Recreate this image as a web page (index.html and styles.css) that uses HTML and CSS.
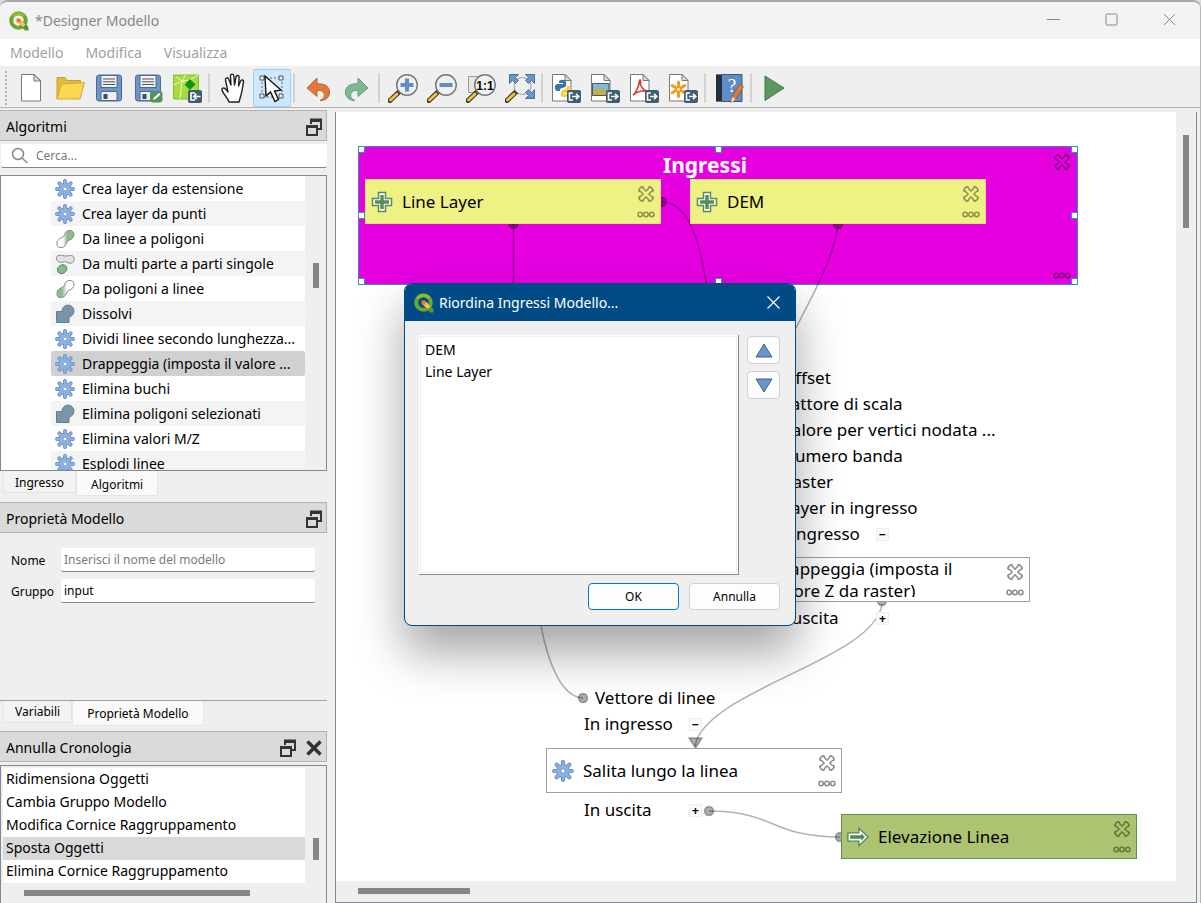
FILE: index.html
```html
<!DOCTYPE html>
<html lang="it">
<head>
  <meta charset="UTF-8" />
  <meta name="viewport" content="width=device-width, initial-scale=1.0"/>
  <title>*Designer Modello</title>
  <link rel="stylesheet" href="styles.css">
</head>
<body>
  <!-- shared icons -->
  <svg class="sprites" width="0" height="0">
    <symbol id="qgis" viewBox="0 0 20 20">
      <circle cx="9.5" cy="9.5" r="7.3" fill="none" stroke="#6ea52f" stroke-width="4"/>
      <path d="M3.5 5.5A7.3 7.3 0 0 1 15 5" fill="none" stroke="#8cbf2b" stroke-width="3"/>
      <path d="M12 12l2-2L19.500 16v3.500h-3.500L10.500 14z" fill="#589632"/>
      <path d="M9 9l3.500 0 4 4.500-2.500 2.500L9 12z" fill="#f0c264"/>
      <path d="M7.500 7.500h4v4h-4z" fill="#ee7913"/>
    </symbol>
    <symbol id="gear" viewBox="0 0 20 20">
      <g stroke="#5b88c2" stroke-width="3.800" stroke-linecap="round">
        <path d="M10 2v16M2 10h16M4.300 4.300l11.400 11.400M15.700 4.300L4.300 15.700"/>
      </g>
      <circle cx="10" cy="10" r="6.200" fill="#5b88c2"/>
      <g stroke="#8db1de" stroke-width="2.400" stroke-linecap="round">
        <path d="M10 2v16M2 10h16M4.300 4.300l11.400 11.400M15.700 4.300L4.300 15.700"/>
      </g>
      <circle cx="10" cy="10" r="5.500" fill="#8db1de"/>
      <circle cx="10" cy="10" r="2" fill="#fff" stroke="#7ba0d2"/>
    </symbol>
    <linearGradient id="fadeGreen" x1="0" y1="0" x2="1" y2="0">
      <stop offset="0.350" stop-color="#fff"/><stop offset="0.600" stop-color="#8bbd8b"/>
    </linearGradient>
    <linearGradient id="fadeWhite" x1="0" y1="0" x2="1" y2="0">
      <stop offset="0.300" stop-color="#8bbd8b"/><stop offset="0.600" stop-color="#fff"/>
    </linearGradient>
    <symbol id="line2poly" viewBox="0 0 20 20">
      <path d="M2 14c0-4 4-5 6-6s1-6 6-6.500 6 4 4 7-5 2-6 4.500-2 5.500-6 5.500-4-2-4-4.500z" fill="url(#fadeGreen)" stroke="#7e8c7e"/>
    </symbol>
    <symbol id="poly2line" viewBox="0 0 20 20">
      <path d="M2 14c0-4 4-5 6-6s1-6 6-6.500 6 4 4 7-5 2-6 4.500-2 5.500-6 5.500-4-2-4-4.500z" fill="url(#fadeWhite)" stroke="#7e8c7e"/>
    </symbol>
    <symbol id="multipart" viewBox="0 0 20 20">
      <path d="M1.500 3.500c1-4 6-1.500 9-1.500s8-2 8.500 2-2 6-5 5-4-2-6-1-7 0-6.500-4.500z" fill="#e3e3e3" stroke="#8a8a8a"/>
      <path d="M2.500 16c-.5-3 3.500-6 7-5s3 8-2.500 8.500c-3 0-4.500-1-4.500-3.500z" fill="#85b985" stroke="#5a7f5a"/>
    </symbol>
    <symbol id="dissolve" viewBox="0 0 20 20">
      <path d="M1.500 7.500H7A6 6 0 1 1 14 13v5.500H1.500z" fill="#7a94a8" stroke="#62808f"/>
    </symbol>
    <symbol id="float" viewBox="0 0 16 18">
      <path d="M5 6V1.500h10V11h-4" fill="none" stroke="#333" stroke-width="2"/>
      <path d="M4 1h12v3H4z" fill="#333"/>
      <path d="M1 8h10v9H1z" fill="#dadada" stroke="#333" stroke-width="2"/>
      <path d="M0 7h12v3H0z" fill="#333"/>
    </symbol>
    <symbol id="del" viewBox="0 0 18 18">
      <g fill="none" stroke="currentColor" stroke-linecap="round">
        <path d="M4.500 4.500l9 9M13.500 4.500l-9 9" stroke-width="5.500"/>
        <path d="M3 5.300h0M5.300 3h0M15 5.300h0M12.700 3h0M3 12.700h0M5.300 15h0M15 12.700h0M12.700 15h0" stroke-width="3.800"/>
      </g>
      <g fill="none" stroke="var(--fill)" stroke-linecap="round">
        <path d="M4.500 4.500l9 9M13.500 4.500l-9 9" stroke-width="2.600"/>
        <path d="M3.300 5.500h0M5.500 3.300h0M14.700 5.500h0M12.500 3.300h0M3.300 12.500h0M5.500 14.700h0M14.700 12.500h0M12.500 14.700h0" stroke-width="1"/>
      </g>
    </symbol>
    <symbol id="more" viewBox="0 0 18 7">
      <g fill="none" stroke="currentColor" stroke-width="1.500">
        <circle cx="3.200" cy="3.500" r="2.200"/><circle cx="9" cy="3.500" r="2.200"/><circle cx="14.800" cy="3.500" r="2.200"/>
      </g>
    </symbol>
    <symbol id="plus" viewBox="0 0 22 22">
      <path d="M7.500 1.500h7v6h6v7h-6v6h-7v-6h-6v-7h6z" fill="#fff" stroke="#5a8c5a" stroke-width="1.500"/>
      <path d="M11 4v14M4 11h14" stroke="#5a8c5a" stroke-width="3.500"/>
    </symbol>
    <symbol id="arrow" viewBox="0 0 24 22">
      <path d="M1 6.500h12V1.500l10 9.500-10 9.500v-5H1z" fill="#fff" stroke="#4f8a56" stroke-width="1.500"/>
      <path d="M3.500 9h12V7l4 4-4 4v-2h-12z" fill="#4f8a56"/>
    </symbol>
    <symbol id="lens" viewBox="0 0 30 30">
      <path d="M2 27.500L11 19" stroke="#333" stroke-width="5" stroke-linecap="round"/>
      <path d="M2.500 27L9 21" stroke="#f4c33c" stroke-width="3" stroke-linecap="round"/>
      <circle cx="19" cy="12" r="10.300" fill="#f0f0ee" stroke="#777" stroke-width="1.500"/>
    </symbol>
    <symbol id="sheet" viewBox="0 0 30 30">
      <path d="M1.500 1.500h12.500l6 6v20.500h-18.500z" fill="#fff" stroke="#777"/>
      <path d="M14 1.500v6h6z" fill="#ddd" stroke="#777"/>
    </symbol>
    <symbol id="out" viewBox="0 0 30 30">
      <rect x="16" y="17" width="14" height="13" rx="2" fill="#3f5d73"/>
      <path d="M22 20h-3.500v7H22M21 23.500h6.500M25 20.800l2.800 2.700L25 26.200" fill="none" stroke="#fff" stroke-width="1.600"/>
    </symbol>
    <symbol id="floppy" viewBox="0 0 30 30">
      <rect x="2.500" y="2" width="25" height="26" rx="2.500" fill="#6d96c4" stroke="#4a6a90"/>
      <path d="M7 2.500h16v12H7z" fill="#f2f2f2" stroke="#4a6a90"/>
      <path d="M9 6h12M9 8.800h12M9 11.500h12" stroke="#555"/>
      <path d="M7 18.500h16v9H7z" fill="#eee" stroke="#4a6a90"/>
      <path d="M9.500 21h4v5h-4z" fill="#35506f"/>
    </symbol>
  </svg>

  <div class="window">
    <header class="titlebar">
      <svg class="logo"><use href="#qgis"/></svg>
      <span class="title">*Designer Modello</span>
      <button class="win-btn" aria-label="Riduci"><svg width="13" height="13"><path d="M0 6.500h13" stroke="#888"/></svg></button>
      <button class="win-btn" aria-label="Ingrandisci"><svg width="13" height="13"><rect x="1" y="1" width="11" height="11" rx="1" fill="none" stroke="#888"/></svg></button>
      <button class="win-btn" aria-label="Chiudi"><svg width="13" height="13"><path d="M1 1l11 11M12 1L1 12" stroke="#888"/></svg></button>
    </header>

    <nav class="menubar">
      <button>Modello</button>
      <button>Modifica</button>
      <button>Visualizza</button>
    </nav>

    <div class="toolbar">
      <span class="grip"></span>
      <button aria-label="Nuovo"><svg viewBox="0 0 30 30"><path d="M5.500 1.500h13l6 6v20.500h-19z" fill="#fff" stroke="#777"/><path d="M18 1.500v6.500h6.500z" fill="#ddd" stroke="#777"/></svg></button>
      <button aria-label="Apri"><svg viewBox="0 0 30 30"><path d="M2 26V4.500h8l2 3h13.500V12" fill="#e3b93f" stroke="#c79f31"/><path d="M2 26L6.500 11l23-1.500L25 26z" fill="#fbd84f" stroke="#d2aa35"/></svg></button>
      <button aria-label="Salva"><svg viewBox="0 0 30 30"><use href="#floppy"/></svg></button>
      <button aria-label="Salva con nome"><svg viewBox="0 0 30 30"><use href="#floppy"/><rect x="17" y="18" width="12.500" height="11.500" rx="3" fill="#56905a"/><path d="M20 27l1-2.500 5-4.500 1.500 1.500-5 4.500z" fill="#fff"/></svg></button>
      <button aria-label="Salva nel progetto"><svg viewBox="0 0 30 30"><path d="M1.500 2h25v24h-25z" fill="#a9da3f" stroke="#7fbf2c"/><path d="M1.500 12l9-4 16 14M10.500 8l3-6M10 8l-2 18M4 4l6 4 8-1 8-5" fill="none" stroke="#e8f6c0"/><path d="M18 6l5.500 5.500-5.500 5.500-5.500-5.500z" fill="#0d9410"/><rect x="16" y="17" width="14" height="13" rx="2" fill="#3f5d73"/><path d="M23 20h-4v7h4M28.500 23.500h-6.500M24.500 20.800l-2.800 2.700 2.800 2.700" fill="none" stroke="#fff" stroke-width="1.600"/></svg></button>
      <span class="sep"></span>
      <button aria-label="Sposta mappa"><svg viewBox="0 0 30 30"><path d="M11 29c-1-4-6-8-7-12-.5-2 2-3 4-.5l2 2.500L7.500 7c-.5-2.500 2.500-3 3.200-.8L13 12l-.5-9c0-2.500 3-2.500 3.300 0L16.500 12l1.500-8c.5-2.300 3.300-1.800 3.100.5L20.500 13l2.200-5c.9-2 3.300-1 2.800 1-1 5-1 8-2.500 13l-2 7z" fill="#fff" stroke="#222" stroke-width="1.400" stroke-linejoin="round"/></svg></button>
      <button class="checked" aria-label="Seleziona"><svg viewBox="0 0 30 30"><path d="M5 5h20v19H5z" fill="none" stroke="#666" stroke-dasharray="2 2"/><path d="M3 3h4v4H3zM22 3h4v4h-4zM3 21h4v4H3zM22 21h4v4h-4z" fill="#eee" stroke="#555"/><path d="M8 3l1 20 4.500-4 4.500 9.500 3.500-2-4-8.500 6.500-1z" fill="#fff" stroke="#111" stroke-width="1.400"/></svg></button>
      <span class="sep"></span>
      <button aria-label="Annulla"><svg viewBox="0 0 30 30"><path d="M4 15L14 5v6c8-1 13 3 12.500 9-.5 5-4 7.500-9.500 7.500 4-2 5-4 4-7-1-2.500-3.500-3.500-7-3v6z" fill="#e07a3a" stroke="#c8612a"/></svg></button>
      <button aria-label="Ripeti"><svg viewBox="0 0 30 30"><path d="M26 15L16 5v6c-8-1-13 3-12.500 9 .5 5 4 7.500 9.500 7.500-4-2-5-4-4-7 1-2.500 3.500-3.500 7-3v6z" fill="#7fb790" stroke="#62a077"/></svg></button>
      <span class="sep"></span>
      <button aria-label="Zoom avanti"><svg viewBox="0 0 30 30"><use href="#lens"/><path d="M19 5.500v13M12.500 12h13" stroke="#5f8cc2" stroke-width="4"/></svg></button>
      <button aria-label="Zoom indietro"><svg viewBox="0 0 30 30"><use href="#lens"/><path d="M12.500 12h13" stroke="#5f8cc2" stroke-width="4"/></svg></button>
      <button aria-label="Zoom 100%"><svg viewBox="0 0 30 30"><path d="M2.500 3.500h14v16h-14z" fill="#e6e6e0" stroke="#999"/><use href="#lens"/><text x="19" y="16.500" text-anchor="middle" class="ratio">1:1</text></svg></button>
      <button aria-label="Zoom completo"><svg viewBox="0 0 30 30"><path d="M2 27.500L11 19" stroke="#333" stroke-width="5" stroke-linecap="round"/><path d="M2.500 27L9 21" stroke="#f4c33c" stroke-width="3" stroke-linecap="round"/><circle cx="17.500" cy="13" r="8.500" fill="#f0f0ee" stroke="#999"/><path d="M4.500 1.500h9l-3 3 3 3-3 3-3-3-3 3zM29.500 1.500v9l-3-3-3 3-3-3 3-3-3-3zM29.500 25.500h-9l3-3-3-3 3-3 3 3 3-3z" fill="#6a95c6" stroke="#4d739f"/></svg></button>
      <span class="sep"></span>
      <button aria-label="Esporta come Python"><svg viewBox="0 0 30 30"><use href="#sheet"/><path d="M8 9c0-3 7-3 7 0v4c0 2-6 1-6 4v1H6c-3-1-3-6 0-7h6v-1H8z" fill="#3a73a5"/><path d="M17 22c0 3-7 3-7 0v-3c0-3 6-2 6-5v-1h2c3 1 3 6 0 7h-5v1h4z" fill="#f8cf40"/><use href="#out"/></svg></button>
      <button aria-label="Esporta come immagine"><svg viewBox="0 0 30 30"><use href="#sheet"/><path d="M2.500 10.500h16.500v12H2.500z" fill="#7fb8e0" stroke="#555"/><path d="M3 18c3-2 6-4 8-3s5 2 7.500 2v5H3z" fill="#c4b04a"/><use href="#out"/></svg></button>
      <button aria-label="Esporta come PDF"><svg viewBox="0 0 30 30"><use href="#sheet"/><path d="M4 22c2-1 6-8 6.500-14 .3-2 1.500-1 1 1-1 4 3 8 7 10-4-2-10-1-14.500 3z" fill="none" stroke="#d83a2e" stroke-width="1.600"/><use href="#out"/></svg></button>
      <button aria-label="Esporta come SVG"><svg viewBox="0 0 30 30"><use href="#sheet"/><path d="M10.500 9v14.500M4.200 12.600l12.600 7.200M16.800 12.600L4.200 19.800" stroke="#f39b1d" stroke-width="3" stroke-linecap="round"/><circle cx="10.500" cy="16.200" r="1.500" fill="#fff"/><use href="#out"/></svg></button>
      <span class="sep"></span>
      <button aria-label="Modifica aiuto"><svg viewBox="0 0 30 30"><path d="M2 1.500h26v27H2z" fill="#5f8cc2"/><path d="M2 1.500h6v27H2z" fill="#23303f"/><path d="M8 1.500h20v27H8" fill="none" stroke="#3a577c"/><text x="18" y="19" text-anchor="middle" class="mark">?</text><path d="M26 11l3.500 2.500-8 13-4.500 3.500 1-6z" fill="#e07a3a" stroke="#a34d1c" stroke-width=".7"/><path d="M18 24l3.500 2.500-4.500 3.500z" fill="#ddd"/></svg></button>
      <span class="sep"></span>
      <button aria-label="Esegui"><svg viewBox="0 0 30 30"><path d="M5 3l19 12-19 12.500z" fill="#5a9a60" stroke="#3f7a48"/></svg></button>
    </div>

    <main class="main">
      <aside class="docks">
        <section class="dock dock-algorithms">
          <h2>Algoritmi<button class="dock-btn" aria-label="Sgancia"><svg width="16" height="18"><use href="#float"/></svg></button></h2>
          <div class="search">
            <svg width="18" height="18" fill="none" stroke="#888" stroke-width="1.500"><circle cx="7" cy="7" r="5.500"/><path d="M11 11l5.500 5"/></svg>
            <input type="text" aria-label="Cerca" placeholder="Cerca...">
          </div>
          <div class="tree">
            <ul>
              <li><svg><use href="#gear"/></svg>Crea layer da estensione</li>
              <li><svg><use href="#gear"/></svg>Crea layer da punti</li>
              <li><svg><use href="#line2poly"/></svg>Da linee a poligoni</li>
              <li><svg><use href="#multipart"/></svg>Da multi parte a parti singole</li>
              <li><svg><use href="#poly2line"/></svg>Da poligoni a linee</li>
              <li><svg><use href="#dissolve"/></svg>Dissolvi</li>
              <li><svg><use href="#gear"/></svg>Dividi linee secondo lunghezza...</li>
              <li class="selected"><svg><use href="#gear"/></svg>Drappeggia (imposta il valore ...</li>
              <li><svg><use href="#gear"/></svg>Elimina buchi</li>
              <li><svg><use href="#dissolve"/></svg>Elimina poligoni selezionati</li>
              <li><svg><use href="#gear"/></svg>Elimina valori M/Z</li>
              <li><svg><use href="#gear"/></svg>Esplodi linee</li>
            </ul>
            <div class="vscroll"><span class="thumb"></span></div>
          </div>
          <div class="tabs">
            <button>Ingresso</button>
            <button class="active">Algoritmi</button>
          </div>
        </section>

        <section class="dock">
          <h2>Proprietà Modello<button class="dock-btn" aria-label="Sgancia"><svg width="16" height="18"><use href="#float"/></svg></button></h2>
          <form class="props">
            <label for="nome">Nome</label>
            <input type="text" id="nome" placeholder="Inserisci il nome del modello">
            <label for="gruppo">Gruppo</label>
            <input type="text" id="gruppo" value="input">
          </form>
          <div class="tabs tabs-line">
            <button>Variabili</button>
            <button class="active">Proprietà Modello</button>
          </div>
        </section>

        <section class="dock">
          <h2>Annulla Cronologia
            <button class="dock-btn" aria-label="Sgancia"><svg width="16" height="18"><use href="#float"/></svg></button>
            <button class="dock-btn" aria-label="Chiudi"><svg width="16" height="16"><path d="M1.500 1.500l13 13M14.500 1.500l-13 13" stroke="#333" stroke-width="3.500"/></svg></button>
          </h2>
          <div class="history">
            <ul>
              <li>Ridimensiona Oggetti</li>
              <li>Cambia Gruppo Modello</li>
              <li>Modifica Cornice Raggruppamento</li>
              <li class="selected">Sposta Oggetti</li>
              <li>Elimina Cornice Raggruppamento</li>
            </ul>
            <div class="vscroll"><span class="thumb"></span></div>
            <div class="hscroll"><span class="thumb"></span></div>
          </div>
        </section>
      </aside>

      <section class="view">
        <div class="scene">
          <div class="group">
            <span class="handle tl"></span><span class="handle tc"></span><span class="handle tr"></span>
            <span class="handle ml"></span><span class="handle mr"></span>
            <span class="handle bl"></span><span class="handle bc"></span><span class="handle br"></span>
            <h3>Ingressi</h3>
            <div class="actions">
              <button aria-label="Elimina"><svg width="18" height="18"><use href="#del"/></svg></button>
              <button aria-label="Altro"><svg width="18" height="7"><use href="#more"/></svg></button>
            </div>
          </div>

          <svg class="links">
            <g fill="none">
              <path d="M177.500 112V290C177.500 390 199 488 205 514C212 550 225 585 247 586"/>
              <path d="M326 90C354 90 364 133 371 175"/>
              <path d="M502 114C496 150 479 178 460 216"/>
              <path d="M546 492C539 548 369 578 359 634"/>
              <path d="M373 699C439 699 434 725 504 725"/>
            </g>
            <g class="dots">
              <circle cx="177.500" cy="112" r="4.500"/><circle cx="326" cy="90" r="4.500"/><circle cx="502" cy="112" r="4.500"/>
              <circle cx="247" cy="586" r="4.500"/><circle cx="373" cy="699" r="4.500"/><circle cx="504" cy="725" r="4.500"/>
              <circle cx="546" cy="489" r="4.500"/><path d="M353 626h13l-6.500 10z"/>
            </g>
          </svg>

          <div class="node input n-line">
            <svg class="kind"><use href="#plus"/></svg><span>Line Layer</span>
            <div class="actions">
              <button aria-label="Elimina"><svg width="18" height="18"><use href="#del"/></svg></button>
              <button aria-label="Altro"><svg width="18" height="7"><use href="#more"/></svg></button>
            </div>
          </div>
          <div class="node input n-dem">
            <svg class="kind"><use href="#plus"/></svg><span>DEM</span>
            <div class="actions">
              <button aria-label="Elimina"><svg width="18" height="18"><use href="#del"/></svg></button>
              <button aria-label="Altro"><svg width="18" height="7"><use href="#more"/></svg></button>
            </div>
          </div>

          <div class="ports p-drape-in">
            <span class="port">Offset</span>
            <span class="port">Fattore di scala</span>
            <span class="port">Valore per vertici nodata ...</span>
            <span class="port">Numero banda</span>
            <span class="port">Raster</span>
            <span class="port">Layer in ingresso</span>
            <div class="side"><span>In ingresso</span><button class="fold">−</button></div>
          </div>
          <div class="node n-drape">
            <svg class="kind"><use href="#gear"/></svg><span class="wrap">Drappeggia (imposta il valore Z da raster)</span>
            <div class="actions">
              <button aria-label="Elimina"><svg width="18" height="18"><use href="#del"/></svg></button>
              <button aria-label="Altro"><svg width="18" height="7"><use href="#more"/></svg></button>
            </div>
          </div>
          <div class="ports p-drape-out">
            <div class="side"><span>In uscita</span><button class="fold">+</button></div>
          </div>

          <div class="ports p-climb-in">
            <span class="port">Vettore di linee</span>
            <div class="side"><span>In ingresso</span><button class="fold">−</button></div>
          </div>
          <div class="node n-climb">
            <svg class="kind"><use href="#gear"/></svg><span>Salita lungo la linea</span>
            <div class="actions">
              <button aria-label="Elimina"><svg width="18" height="18"><use href="#del"/></svg></button>
              <button aria-label="Altro"><svg width="18" height="7"><use href="#more"/></svg></button>
            </div>
          </div>
          <div class="ports p-climb-out">
            <div class="side"><span>In uscita</span><button class="fold">+</button></div>
          </div>

          <div class="node output n-out">
            <svg class="kind"><use href="#arrow"/></svg><span>Elevazione Linea</span>
            <div class="actions">
              <button aria-label="Elimina"><svg width="18" height="18"><use href="#del"/></svg></button>
              <button aria-label="Altro"><svg width="18" height="7"><use href="#more"/></svg></button>
            </div>
          </div>
        </div>
        <div class="vscroll"><span class="thumb"></span></div>
        <div class="hscroll"><span class="thumb"></span></div>
      </section>
    </main>

    <div class="dialog" role="dialog" aria-labelledby="dialogTitle">
      <div class="dialog-title">
        <svg class="logo"><use href="#qgis"/></svg>
        <span id="dialogTitle">Riordina Ingressi Modello...</span>
        <button aria-label="Chiudi"><svg width="13" height="13"><path d="M.5.500l12 12M12.500.500l-12 12" stroke="#fff" stroke-width="1.200"/></svg></button>
      </div>
      <div class="dialog-body">
        <ul class="order">
          <li>DEM</li>
          <li>Line Layer</li>
        </ul>
        <div class="movers">
          <button aria-label="Sposta su"><svg width="18" height="15"><path d="M9 1l8 13H1z" fill="#6a95c6" stroke="#44658e"/></svg></button>
          <button aria-label="Sposta giù"><svg width="18" height="15"><path d="M9 14l8-13H1z" fill="#6a95c6" stroke="#44658e"/></svg></button>
        </div>
      </div>
      <div class="dialog-buttons">
        <button class="default">OK</button>
        <button>Annulla</button>
      </div>
    </div>
  </div>
</body>
</html>
```

FILE: styles.css
```css
* {
  margin: 0;
  padding: 0;
  box-sizing: border-box;
}

body {
  font-family: "Noto Sans", "Open Sans", sans-serif;
  font-size: 14px;
  color: #000;
  background: #dcdcdc;
}

button, input {
  font: inherit;
  color: inherit;
  border: none;
  background: none;
}

ul {
  list-style: none;
}

.sprites {
  position: absolute;
}

.window {
  position: relative;
  display: flex;
  flex-direction: column;
  height: 100vh;
  background: #efefef;
  border-top: 2px solid #a8a8ac;
  border-right: 1px solid #b5b5b8;
  border-radius: 8px 8px 0 0;
  overflow: hidden;
}

/* title and menu */
.titlebar {
  display: flex;
  align-items: center;
  height: 37px;
  padding: 0 2px 0 9px;
  background: #f3f3f3;
  color: #868686;
}

.logo {
  width: 20px;
  height: 20px;
  margin-right: 6px;
}

.titlebar .title {
  flex: 1;
}

.win-btn {
  width: 58px;
  height: 37px;
}

.menubar {
  display: flex;
  gap: 22px;
  height: 27px;
  padding-left: 10px;
  background: #fff;
  color: #a0a0a0;
}

/* toolbar */
.toolbar {
  display: flex;
  align-items: center;
  gap: 1px;
  height: 42px;
  padding: 3px 0 0 5px;
  border-bottom: 1px solid #b4b4b4;
}

.toolbar button {
  display: flex;
  align-items: center;
  justify-content: center;
  width: 38px;
  height: 38px;
}

.toolbar button.checked {
  background: #cce8ff;
  border: 1px solid #99d1ff;
  border-radius: 2px;
}

.toolbar svg {
  flex: none;
  width: 30px;
  height: 30px;
}

.ratio {
  font: bold 12px "Liberation Sans", sans-serif;
}

.mark {
  font: 19px "Liberation Serif", serif;
  fill: #fff;
}

.grip {
  height: 34px;
  margin-right: 4px;
  border-left: 2px dotted #b0b0b0;
}

.sep {
  width: 2px;
  height: 30px;
  margin: 0 3px 0 1px;
  background: #d2d2d2;
}

/* docks */
.main {
  flex: 1;
  display: flex;
  gap: 8px;
  min-height: 0;
}

.docks {
  display: flex;
  flex-direction: column;
  gap: 6px;
  width: 327px;
  padding-top: 2px;
}

.dock-algorithms {
  flex: 1;
  display: flex;
  flex-direction: column;
  min-height: 0;
}

.dock h2 {
  display: flex;
  align-items: center;
  gap: 10px;
  height: 31px;
  padding: 2px 4px 0 6px;
  border: 1px solid #b4b4b4;
  border-left: none;
  background: #dadada;
  font-size: 14px;
  font-weight: normal;
}

.dock-btn {
  display: flex;
}

.dock-btn:first-of-type {
  margin-left: auto;
}

.search {
  display: flex;
  align-items: center;
  gap: 7px;
  height: 24px;
  margin: 3px 0 7px 1px;
  padding-left: 10px;
  background: #fff;
  border-bottom: 1px solid #868686;
  border-radius: 2px;
  font-size: 12px;
}

.search input {
  flex: 1;
}

input::placeholder {
  color: #7a7a7a;
}

.tree {
  flex: 1;
  display: flex;
  min-height: 0;
  border: 1px solid #828790;
  background: #fff;
  overflow: hidden;
}

.tree ul {
  flex: 1;
  padding-left: 50px;
}

.tree li {
  display: flex;
  align-items: center;
  gap: 7px;
  height: 25px;
  padding-left: 4px;
  white-space: nowrap;
}

.tree li:nth-child(even) {
  background: #f4f4f4;
}

.tree li.selected {
  background: #d0d0d0;
  border-radius: 2px;
}

.tree li svg {
  width: 20px;
  height: 20px;
}

.vscroll {
  width: 21px;
  background: #efefef;
}

.hscroll {
  background: #efefef;
}

.thumb {
  display: block;
  background: #868686;
}

.vscroll .thumb {
  width: 6px;
  margin-left: 8px;
}

.hscroll .thumb {
  height: 6px;
}

.tree .thumb {
  height: 25px;
  margin-top: 87px;
}

.tabs {
  display: flex;
  align-items: flex-start;
  height: 25px;
  padding-left: 3px;
  font-size: 12px;
}

.tabs button {
  height: 22px;
  padding: 2px 11px 0;
  background: #f3f3f3;
  border: 1px solid #e5e5e5;
  border-top: none;
}

.tabs button.active {
  height: 25px;
  padding: 2px 14px 0;
  background: #f9f9f9;
}

.tabs-line {
  border-top: 1px solid #a0a0a0;
}

.tabs-line button, .tabs-line button.active {
  padding-top: 0;
}

.props {
  display: grid;
  grid-template-columns: 50px 1fr;
  align-items: center;
  gap: 7px 0;
  height: 167px;
  align-content: start;
  padding: 15px 12px 0 11px;
  font-size: 12px;
}

.props input {
  height: 24px;
  padding: 0 3px;
  background: #fff;
  border-bottom: 1px solid #868686;
  border-radius: 2px;
}

.history {
  display: grid;
  grid-template-columns: 1fr 21px;
  margin-top: 3px;
  border: 1px solid #828790;
  border-bottom: none;
}

.history ul {
  margin: 2px 0 0 2px;
  background: #fff;
}

.history li {
  height: 23px;
  padding-left: 3px;
  line-height: 21px;
}

.history li.selected {
  background: #d9d9d9;
}

.history .vscroll .thumb {
  height: 22px;
  margin-top: 72px;
}

.history .hscroll {
  height: 20px;
  padding: 7px 55px 0 23px;
}

/* graph view */
.view {
  flex: 1;
  display: grid;
  grid-template-columns: 1fr 20px;
  grid-template-rows: 1fr 21px;
  margin: 4px 3px 0 0;
  border: 1px solid #828790;
  border-top: none;
}

.scene {
  position: relative;
  background: #fff;
  font-family: "Noto Sans", "DejaVu Sans Condensed", sans-serif;
  font-size: 17px;
  overflow: hidden;
}

.view .vscroll {
  width: 20px;
}

.view .vscroll .thumb {
  height: 93px;
  margin: 23px 0 0 7px;
}

.view .hscroll .thumb {
  width: 112px;
  margin: 7px 0 0 22px;
}

.links {
  position: absolute;
  inset: 0;
  width: 100%;
  height: 100%;
  stroke: rgba(0, 0, 0, .3);
  stroke-width: 1.500;
}

.dots {
  fill: rgba(0, 0, 0, .32);
}

.group {
  --fill: #e600e0;
  position: absolute;
  left: 22px;
  top: 34px;
  width: 720px;
  height: 139px;
  background: #e600e0;
  border: 1px solid #2f8fd0;
  color: #860086;
}

.group h3 {
  color: #fff;
  font-size: 21px;
  line-height: 36px;
  padding-right: 26px;
  text-align: center;
}

.handle {
  position: absolute;
  width: 7px;
  height: 7px;
  background: #fff;
  border: 1px solid #2f8fd0;
}

.tl, .ml, .bl { left: -1px; }
.tc, .bc { left: 356px; }
.tr, .mr, .br { right: -1px; }
.tl, .tc, .tr { top: -1px; }
.ml, .mr { top: 65px; }
.bl, .bc, .br { bottom: -1px; }

.actions {
  position: absolute;
  top: 5px;
  right: 5px;
  bottom: 5px;
  display: flex;
  flex-direction: column;
  justify-content: space-between;
}

.actions button {
  display: flex;
}

.group .actions {
  top: 6px;
  right: 6px;
}

.node {
  --fill: #fff;
  position: absolute;
  display: flex;
  align-items: center;
  gap: 9px;
  width: 296px;
  height: 45px;
  padding-left: 5px;
  background: var(--fill);
  border: 1px solid #a0a0a0;
}

.node .kind {
  flex: none;
  width: 22px;
  height: 22px;
}

.node .actions {
  color: #8a8a8a;
}

.node .wrap {
  align-self: flex-start;
  width: 190px;
  height: 39px;
  line-height: 22px;
  overflow: hidden;
}

.input {
  --fill: #eef183;
  border-color: #eadf7a;
}

.input .actions {
  color: #8f904f;
}

.output {
  --fill: #adc371;
  border-color: #5a9455;
}

.output .actions {
  color: #67753f;
}

.n-line { left: 29px; top: 67px; }
.n-dem { left: 354px; top: 67px; }
.n-drape { left: 398px; top: 445px; }
.n-climb { left: 210px; top: 636px; }
.n-out { left: 505px; top: 702px; }

.ports {
  position: absolute;
  display: flex;
  flex-direction: column;
  line-height: 26px;
  white-space: nowrap;
}

.p-drape-in { left: 435px; top: 253px; }
.p-drape-out { left: 435px; top: 493px; }
.p-climb-in { left: 248px; top: 573px; }
.p-climb-out { left: 248px; top: 685px; }

.port {
  padding-left: 11px;
}

.side {
  display: flex;
  align-items: center;
  width: 118px;
  justify-content: space-between;
}

.fold {
  width: 13px;
  height: 13px;
  background: #fafafa;
  border: 1px solid #eee;
  font-size: 12px;
  font-weight: bold;
  line-height: 11px;
}

/* reorder dialog */
.dialog {
  position: absolute;
  left: 404px;
  top: 281px;
  width: 392px;
  background: #efefef;
  border: 1px solid #004b85;
  border-radius: 8px;
  box-shadow: 0 26px 48px rgba(0, 0, 0, .36);
  overflow: hidden;
}

.dialog-title {
  display: flex;
  align-items: center;
  height: 37px;
  padding: 0 15px 0 9px;
  background: #004b85;
  color: #fff;
}

.dialog-title .logo {
  margin-right: 5px;
}

.dialog-title button {
  display: flex;
  margin-left: auto;
}

.dialog-body {
  display: flex;
  gap: 8px;
  padding: 14px 15px 8px 14px;
}

.order {
  flex: 1;
  height: 240px;
  padding: 4px 6px;
  background: #fff;
  border-right: 1px solid #828790;
  border-bottom: 1px solid #828790;
  box-shadow: inset 0 0 0 1px #fff, inset 0 0 0 2px #eee;
}

.order li {
  line-height: 22px;
}

.movers {
  display: flex;
  flex-direction: column;
  gap: 7px;
  padding-top: 1px;
}

.movers button, .dialog-buttons button {
  background: #fdfdfd;
  border: 1px solid #d0d0d0;
  border-radius: 4px;
}

.movers button {
  display: flex;
  align-items: center;
  justify-content: center;
  width: 33px;
  height: 28px;
}

.dialog-buttons {
  display: flex;
  justify-content: flex-end;
  gap: 10px;
  padding: 0 15px 15px;
  font-size: 12px;
}

.dialog-buttons button {
  width: 91px;
  height: 27px;
}

.dialog-buttons .default {
  border-color: #0078d4;
}
```
